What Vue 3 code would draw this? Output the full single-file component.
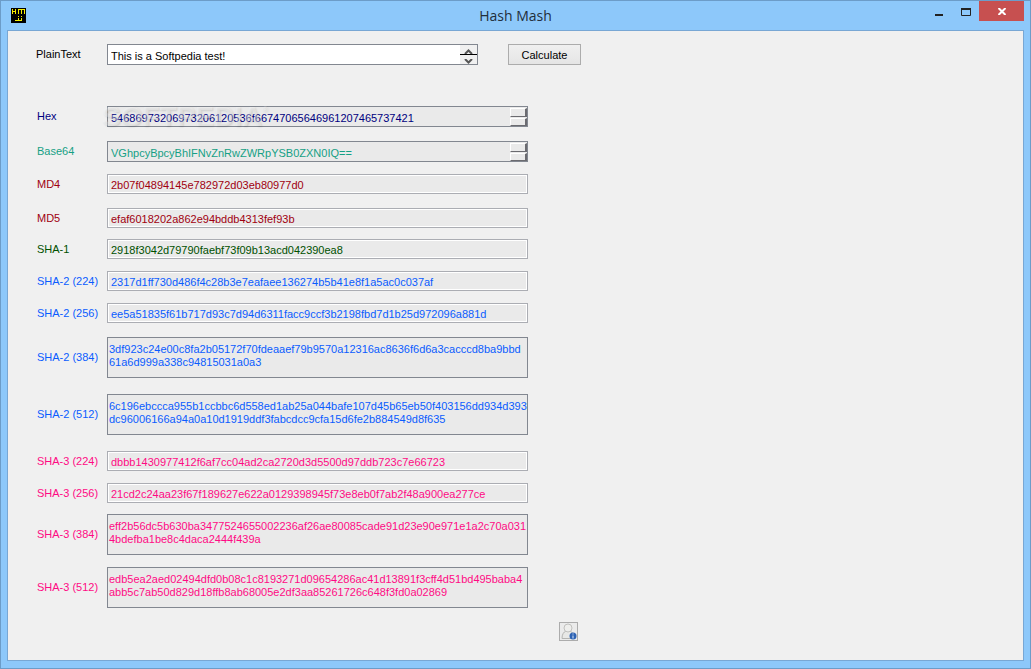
<script setup>
import { ref } from 'vue'

const plainText = ref('This is a Softpedia test!')

const hashes = [
  { id: 'hex', label: 'Hex', tone: 'navy', kind: 'spin', gap: '', value: '54686973206973206120536f66747065646961207465737421' },
  { id: 'base64', label: 'Base64', tone: 'green', kind: 'spin', gap: 'gap-l', value: 'VGhpcyBpcyBhIFNvZnRwZWRpYSB0ZXN0IQ==' },
  { id: 'md4', label: 'MD4', tone: 'maroon', kind: 'line', gap: 'gap-m', value: '2b07f04894145e782972d03eb80977d0' },
  { id: 'md5', label: 'MD5', tone: 'maroon', kind: 'line', gap: 'gap-l', value: 'efaf6018202a862e94bddb4313fef93b' },
  { id: 'sha1', label: 'SHA-1', tone: 'forest', kind: 'line', gap: 'gap-s', value: '2918f3042d79790faebf73f09b13acd042390ea8' },
  { id: 'sha2-224', label: 'SHA-2 (224)', tone: 'blue', kind: 'line', gap: 'gap-m', value: '2317d1ff730d486f4c28b3e7eafaee136274b5b41e8f1a5ac0c037af' },
  { id: 'sha2-256', label: 'SHA-2 (256)', tone: 'blue', kind: 'line', gap: 'gap-m', value: 'ee5a51835f61b717d93c7d94d6311facc9ccf3b2198fbd7d1b25d972096a881d' },
  { id: 'sha2-384', label: 'SHA-2 (384)', tone: 'blue', kind: 'area', gap: 'gap-l', value: '3df923c24e00c8fa2b05172f70fdeaaef79b9570a12316ac8636f6d6a3cacccd8ba9bbd\n61a6d999a338c94815031a0a3' },
  { id: 'sha2-512', label: 'SHA-2 (512)', tone: 'blue', kind: 'area', gap: 'gap-xl', value: '6c196ebccca955b1ccbbc6d558ed1ab25a044bafe107d45b65eb50f403156dd934d393\ndc96006166a94a0a10d1919ddf3fabcdcc9cfa15d6fe2b884549d8f635' },
  { id: 'sha3-224', label: 'SHA-3 (224)', tone: 'pink', kind: 'line', gap: 'gap-xl', value: 'dbbb1430977412f6af7cc04ad2ca2720d3d5500d97ddb723c7e66723' },
  { id: 'sha3-256', label: 'SHA-3 (256)', tone: 'pink', kind: 'line', gap: 'gap-m', value: '21cd2c24aa23f67f189627e622a0129398945f73e8eb0f7ab2f48a900ea277ce' },
  { id: 'sha3-384', label: 'SHA-3 (384)', tone: 'pink', kind: 'area', gap: 'gap-s', value: 'eff2b56dc5b630ba3477524655002236af26ae80085cade91d23e90e971e1a2c70a031\n4bdefba1be8c4daca2444f439a' },
  { id: 'sha3-512', label: 'SHA-3 (512)', tone: 'pink', kind: 'area', gap: 'gap-m', value: 'edb5ea2aed02494dfd0b08c1c8193271d09654286ac41d13891f3cff4d51bd495baba4\nabb5c7ab50d829d18ffb8ab68005e2df3aa85261726c648f3fd0a02869' },
]
</script>

<template>
  <div class="window">
    <header class="titlebar">
      <svg class="app-icon" width="15" height="15" viewBox="0 0 15 15" aria-hidden="true" shape-rendering="crispEdges">
        <rect width="15" height="15" fill="#000" />
        <path d="M1 1h1v5h-1zM4 1h1v5h-1zM2 3h2v1h-2zM7 1h1v5h-1zM10 1h1v5h-1zM13 1h1v5h-1zM8 1h5v1h-5zM7 8h1v1h-1zM10 8h1v1h-1zM7 10h1v3h-4v-1h3zM10 10h1v3h-3v-1h2z" fill="#f6ee00" />
      </svg>
      <h1 class="title">Hash Mash</h1>
      <div class="controls">
        <button class="control" type="button" aria-label="Minimize">
          <svg width="10" height="12" viewBox="0 0 10 12"><path d="M1 10h8" stroke="#222" stroke-width="2" /></svg>
        </button>
        <button class="control" type="button" aria-label="Maximize">
          <svg width="10" height="12" viewBox="0 0 10 12"><path d="M0.500 4v6.500h9v-6.500" fill="none" stroke="#222" /><path d="M0 4h10" stroke="#222" stroke-width="2" /></svg>
        </button>
        <button class="control close" type="button" aria-label="Close">
          <svg width="8" height="7" viewBox="0 0 8 7"><path d="M0.500 0l7 7M7.500 0l-7 7" stroke="#fff" stroke-width="2" /></svg>
        </button>
      </div>
    </header>

    <main class="client">
      <form class="row entry" @submit.prevent>
        <label class="label" for="plain">PlainText</label>
        <div class="field plain">
          <input id="plain" v-model="plainText" class="plain-input" type="text" />
          <div class="scroller">
            <button class="step" type="button" aria-label="Scroll up">
              <svg width="9" height="5" viewBox="0 0 9 5"><path d="M1 5l3.500-3.500 3.500 3.500" fill="none" stroke="#555" stroke-width="2" /></svg>
            </button>
            <button class="step" type="button" aria-label="Scroll down">
              <svg width="9" height="5" viewBox="0 0 9 5"><path d="M1 0l3.500 3.500 3.500-3.500" fill="none" stroke="#555" stroke-width="2" /></svg>
            </button>
          </div>
        </div>
        <button class="calculate" type="submit">Calculate</button>
      </form>

      <section class="results">
        <div v-for="h in hashes" :key="h.id" class="row" :class="[h.gap, h.tone]">
          <label class="label" :for="h.id">{{ h.label }}</label>
          <textarea v-if="h.kind === 'area'" :id="h.id" class="area" rows="2" readonly :value="h.value"></textarea>
          <input v-else-if="h.kind === 'line'" :id="h.id" class="line" type="text" readonly :value="h.value" />
          <div v-else class="field spin">
            <input :id="h.id" class="spin-input" type="text" readonly :value="h.value" />
            <div class="bevels">
              <button class="bevel" type="button" aria-label="Scroll up"></button>
              <button class="bevel" type="button" aria-label="Scroll down"></button>
            </div>
          </div>
        </div>
        <span class="watermark">SOFTPEDIA<sup class="mark">®</sup></span>
      </section>

      <button class="about" type="button" aria-label="About">
        <svg width="17" height="17" viewBox="0 0 17 17">
          <path d="M2 15.500c0-4 1.500-6.500 4-7.500h4c2.500 1 4 3.500 4 7.500z" fill="#e8e8e6" stroke="#b4b4b2" />
          <circle cx="8" cy="5" r="4" fill="#eeeeec" stroke="#c0c0be" />
          <circle cx="13" cy="13" r="3.500" fill="#2d62b3" />
          <path d="M13 10.500v1M13 12.500v3" stroke="#dce8fa" />
        </svg>
      </button>
    </main>
  </div>
</template>

<style>
body {
  margin: 0;
}
</style>

<style scoped>
.window {
  box-sizing: border-box;
  min-height: 100vh;
  display: flex;
  flex-direction: column;
  padding: 0 6px 7px;
  border: 1px solid #6c9cc8;
  background: #8dc8fa;
  color: #000;
  font: 11px/13px "Liberation Sans", Arial, sans-serif;
}
button,
input,
textarea {
  box-sizing: border-box;
  margin: 0;
  padding: 0;
  border: 0;
  border-radius: 0;
  outline: 0;
  background: none;
  color: inherit;
  font: inherit;
}
.titlebar {
  display: grid;
  grid-template-columns: 1fr auto 1fr;
  height: 29px;
}
.app-icon {
  margin: 7px 0 0 4px;
}
.title {
  margin: 0;
  color: #222e3a;
  font: 14px/29px "Open Sans", "Noto Sans", sans-serif;
}
.controls {
  display: flex;
  justify-content: flex-end;
  align-items: flex-start;
}
.control {
  display: flex;
  align-items: center;
  justify-content: center;
  width: 27px;
  height: 20px;
}
.close {
  width: 45px;
  background: #c75050;
}
.client {
  flex: 1;
  border: 1px solid #78a7d4;
  background: #f0f0f0;
}
.row {
  display: flex;
  align-items: center;
}
.label {
  flex: none;
  width: 70px;
}
.entry {
  padding: 13px 0 0 28px;
}
.entry .label {
  width: 71px;
}
.field {
  box-sizing: border-box;
  display: flex;
  height: 21px;
  border: 1px solid #828790;
}
.plain {
  width: 371px;
  background: #fff;
}
.plain-input,
.spin-input {
  flex: 1;
  min-width: 0;
  padding: 3px 3px 0;
}
.scroller {
  display: flex;
  flex-direction: column;
  width: 17px;
  background: #f0f0f0;
}
.step {
  display: flex;
  flex: 1;
  align-items: flex-end;
  justify-content: center;
}
.step:first-child {
  border-bottom: 1px solid #000;
}
.calculate {
  width: 73px;
  height: 21px;
  margin-left: 30px;
  padding-top: 2px;
  border: 1px solid #acacac;
  background: linear-gradient(#f0f0f0, #e5e5e5);
}
.results {
  position: relative;
  padding: 41px 0 0 29px;
}
.gap-s { margin-top: 11px; }
.gap-m { margin-top: 12px; }
.gap-l { margin-top: 14px; }
.gap-xl { margin-top: 16px; }
.navy { color: #000080; }
.green { color: #16a085; }
.maroon { color: #a00010; }
.forest { color: #005000; }
.blue { color: #0a5cff; }
.pink { color: #ff0a84; }
.spin,
.line,
.area {
  width: 421px;
  background: #eaeaea;
}
.line {
  height: 20px;
  padding: 2px 3px 0;
  border: 1px solid #abadb3;
  box-shadow: inset 0 0 0 1px #fff;
}
.area {
  display: block;
  height: 41px;
  padding: 5px 1px;
  border: 1px solid #828790;
  resize: none;
  overflow: hidden;
  white-space: pre;
}
.bevels {
  display: flex;
  flex-direction: column;
  gap: 1px;
  width: 17px;
  padding-top: 1px;
}
.bevel {
  flex: 1;
  border: 1px solid #fff;
  border-right: 2px solid #6b6b70;
  border-bottom-color: #6b6b70;
  background: #eaeaea;
}
.watermark {
  position: absolute;
  top: 36px;
  left: 94px;
  color: rgba(255, 255, 255, 0.35);
  font: bold 28px/32px "Liberation Sans", Arial, sans-serif;
  text-shadow: 1px 1px 2px rgba(0, 0, 0, 0.12);
  pointer-events: none;
}
.mark {
  font-size: 8px;
  line-height: 8px;
  vertical-align: 14px;
}
.about {
  display: block;
  width: 19px;
  height: 19px;
  margin: 14px 0 19px 551px;
  border: 1px solid #acacac;
  background: #ebebeb;
}
</style>
